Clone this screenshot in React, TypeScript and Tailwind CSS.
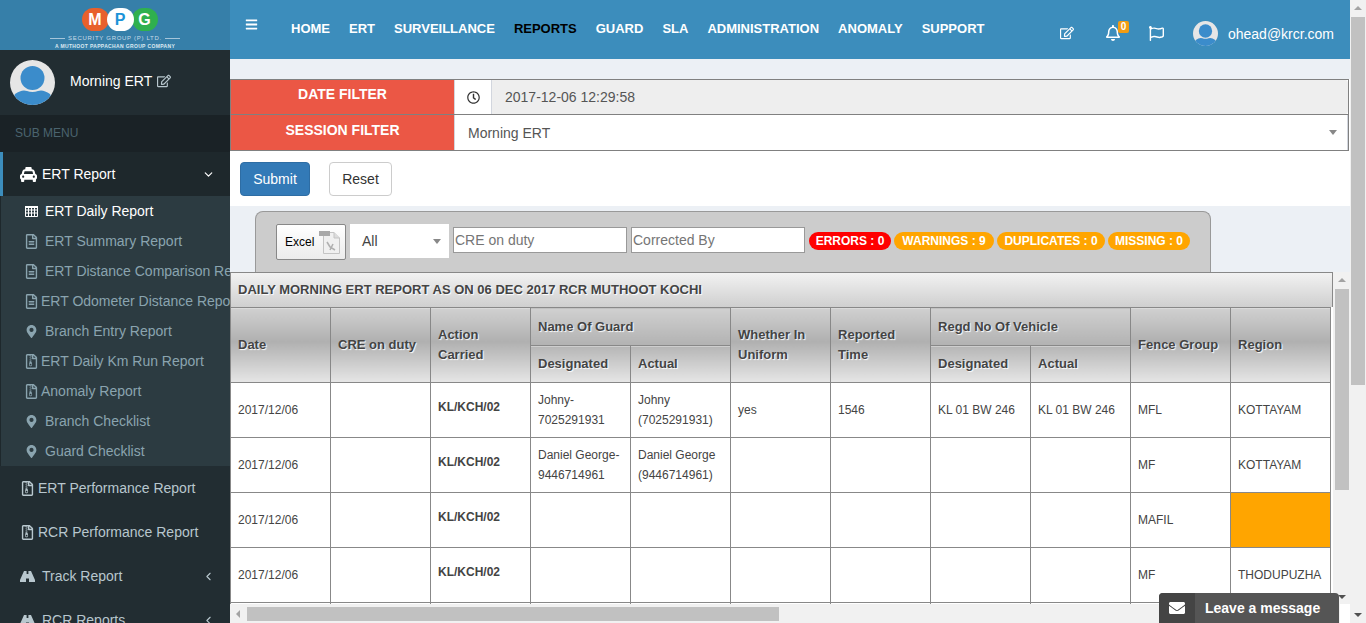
import type { ReactNode } from "react";
import { ChevronDown, ChevronLeft } from "lucide-react";
import {
  FaBars,
  FaEnvelope,
  FaMapMarkerAlt,
  FaRegBell,
  FaRegClock,
  FaRegEdit,
  FaRegFileAlt,
  FaRegFileArchive,
  FaRegFlag,
  FaTaxi,
} from "react-icons/fa";

const NAV = ["HOME", "ERT", "SURVEILLANCE", "REPORTS", "GUARD", "SLA", "ADMINISTRATION", "ANOMALY", "SUPPORT"];

const SUB_ITEMS = [
  { label: "ERT Daily Report", icon: "table", active: true },
  { label: "ERT Summary Report", icon: "file" },
  { label: "ERT Distance Comparison Report", icon: "file" },
  { label: "ERT Odometer Distance Report", icon: "file", tight: true },
  { label: "Branch Entry Report", icon: "pin" },
  { label: "ERT Daily Km Run Report", icon: "zip", tight: true },
  { label: "Anomaly Report", icon: "zip", tight: true },
  { label: "Branch Checklist", icon: "pin" },
  { label: "Guard Checklist", icon: "pin" },
];

const ROWS = [
  { fence: "MFL", region: "KOTTAYAM", cells: ["Johny-", "7025291931", "Johny", "(7025291931)"], uniform: "yes", time: "1546", regd: "KL 01 BW 246" },
  { fence: "MF", region: "KOTTAYAM", cells: ["Daniel George-", "9446714961", "Daniel George", "(9446714961)"] },
  { fence: "MAFIL", region: "", warn: true },
  { fence: "MF", region: "THODUPUZHA" },
];

export default function App() {
  return (
    <div className="flex h-[623px] w-[1366px] overflow-hidden bg-[#ecf0f5] font-['Liberation_Sans',Arial,sans-serif] text-sm text-[#333]">
      <Sidebar />
      <div className="flex min-w-0 flex-1 flex-col">
        <TopBar />
        <div className="h-5 shrink-0" />
        <FilterBox />
        <ReportToolbar />
        <ReportTable />
      </div>
      <PageScrollbar />
      <MessageWidget />
    </div>
  );
}

function Sidebar() {
  return (
    <aside className="flex h-full w-[230px] shrink-0 flex-col overflow-hidden bg-[#222d32]">
      <Logo />
      <div className="flex h-[65px] shrink-0 items-center pl-2.5">
        <Avatar className="h-[45px] w-[45px]" />
        <span className="ml-[15px] mb-[4px] text-sm text-white">Morning ERT</span>
        <FaRegEdit className="mb-[4px] ml-[5px] text-[14px] text-[#b8c7ce]" />
      </div>
      <div className="flex h-[37px] shrink-0 items-center bg-[#1a2226] pb-px pl-[15px] text-xs text-[#4b646f]">SUB MENU</div>
      <div className="flex h-11 shrink-0 items-center border-l-[3px] border-[#3c8dbc] bg-[#1e282c] pl-[17px] pr-[15px] text-white">
        <FaTaxi className="shrink-0 text-[17px]" />
        <span className="ml-[5px]">ERT Report</span>
        <ChevronDown className="ml-auto" size={13} strokeWidth={2.2} />
      </div>
      <div className="flex shrink-0 flex-col border-l border-[#1e282c] bg-[#2c3b41]">
        {SUB_ITEMS.map((item) => (
          <div
            className={`flex h-[30px] items-center overflow-hidden whitespace-nowrap pl-6 ${item.active ? "text-white" : "text-[#8aa4af]"}`}
            key={item.label}
          >
            <span className="flex w-3 shrink-0 justify-center">
              <SubIcon name={item.icon} />
            </span>
            <span className={item.tight ? "ml-[4px]" : "ml-2"}>{item.label}</span>
          </div>
        ))}
      </div>
      <MenuRow icon={<FaRegFileArchive className="shrink-0 text-[15px]" />} label="ERT Performance Report" />
      <MenuRow icon={<FaRegFileArchive className="shrink-0 text-[15px]" />} label="RCR Performance Report" />
      <MenuRow chevron icon={<BinocularsIcon />} label="Track Report" wide />
      <MenuRow chevron icon={<BinocularsIcon />} label="RCR Reports" wide />
    </aside>
  );
}

function MenuRow({ chevron, icon, label, wide }: { chevron?: boolean; icon: ReactNode; label: string; wide?: boolean }) {
  return (
    <div className="flex h-11 shrink-0 items-center pl-[20px] pr-[15px] text-[#b8c7ce]">
      {icon}
      <span className={wide ? "ml-[7px]" : "ml-[3px]"}>{label}</span>
      {chevron && <ChevronLeft className="ml-auto" size={13} strokeWidth={2} />}
    </div>
  );
}

function SubIcon({ name }: { name: string }) {
  if (name === "table") return <TableIcon />;
  if (name === "pin") return <FaMapMarkerAlt className="shrink-0 text-[13px]" />;
  if (name === "zip") return <FaRegFileArchive className="shrink-0 text-[15px]" />;
  return <FaRegFileAlt className="shrink-0 text-[15px]" />;
}

function TableIcon() {
  return (
    <svg aria-hidden="true" className="h-[11px] w-[13px] shrink-0" fill="none" stroke="currentColor" viewBox="0 0 13 11">
      <path d="M.5.5h12v10H.5zM.5 4h12M.5 7h12M3.5 1v9M6.5 1v9M9.5 1v9" />
      <path d="M0 0h13v2H0z" fill="currentColor" stroke="none" />
    </svg>
  );
}

function BinocularsIcon() {
  return (
    <svg aria-hidden="true" className="h-[11px] w-[15px] shrink-0" fill="currentColor" viewBox="0 0 15 11">
      <path d="M4 0h2.6v3h1.8V0H11l4 9v2H9V7.5H6V11H0V9z" />
    </svg>
  );
}

function Logo() {
  return (
    <div className="flex h-[50px] shrink-0 flex-col items-center bg-[#367fa9] pl-[9px] pt-2">
      <div className="flex h-[23px] items-center text-[16px] font-bold leading-none">
        <span className="flex h-[23px] w-[27px] items-center justify-center rounded-full bg-[#e8602c] text-white">M</span>
        <span className="z-10 -mx-[2px] flex h-[23px] w-[27px] items-center justify-center rounded-full bg-white text-[#1b93d8]">P</span>
        <span className="flex h-[23px] w-[26px] items-center justify-center rounded-full bg-[#2fb04e] text-white">G</span>
      </div>
      <div className="-ml-[9px] mt-[3px] flex items-center gap-[3px] text-[6px] leading-[8px] tracking-[0.7px] text-[#c7dbe8]">
        <span className="h-px w-[15px] bg-[#a5c5da]" />
        SECURITY GROUP (P) LTD.
        <span className="h-px w-[15px] bg-[#a5c5da]" />
      </div>
      <div className="-ml-[9px] mt-px text-[5px] font-bold leading-[7px] tracking-[0.35px] text-[#dce9f1]">A MUTHOOT PAPPACHAN GROUP COMPANY</div>
    </div>
  );
}

function Avatar({ className }: { className: string }) {
  return (
    <svg aria-hidden="true" className={`${className} shrink-0`} viewBox="0 0 45 45">
      <defs>
        <clipPath id="avatar-clip">
          <circle cx="22.5" cy="22.5" r="22.5" />
        </clipPath>
      </defs>
      <g clipPath="url(#avatar-clip)">
        <rect fill="#e6e6e6" height="45" width="45" />
        <circle cx="22.5" cy="18" fill="#3b8ccb" r="12" />
        <path d="M0 45 L5 34 Q12 29 17 31 Q22.5 33 28 31 Q33 29 40 34 L45 45 Z" fill="#3b8ccb" />
      </g>
    </svg>
  );
}

function TopBar() {
  return (
    <header className="flex h-[59px] shrink-0 items-start bg-[#3c8dbc] text-white">
      <FaBars className="ml-[15px] mt-[18px] text-[13px]" />
      <nav className="ml-[33px] mt-[20px] flex gap-[19px] text-[13px] font-bold leading-[18px]">
        {NAV.map((item) => (
          <span className={item === "REPORTS" ? "text-black" : "text-white"} key={item}>
            {item}
          </span>
        ))}
      </nav>
      <div className="ml-auto mt-[22px] flex items-start pr-[16px]">
        <FaRegEdit className="mt-[4px] text-[14px]" />
        <span className="relative ml-[31px] mt-[3px]">
          <FaRegBell className="text-[16px]" />
          <span className="absolute -right-[8px] -top-[4px] flex h-[12px] w-[11px] items-center justify-center rounded-[2px] bg-[#f39c12] text-[10px] font-bold leading-none text-white">
            0
          </span>
        </span>
        <FaRegFlag className="ml-[28px] mt-[4px] text-[15px]" />
        <Avatar className="ml-[29px] -mt-[1px] h-[25px] w-[25px]" />
        <span className="ml-[10px] leading-[24px]">ohead@krcr.com</span>
      </div>
    </header>
  );
}

function FilterBox() {
  return (
    <section className="flex h-[127px] shrink-0 flex-col bg-white">
      <div className="mr-px flex h-[36px] border border-[#808080]">
        <div className="w-[223px] shrink-0 bg-[#eb5745] pt-[6px] text-center text-sm font-bold leading-4 text-white">DATE FILTER</div>
        <div className="flex w-[38px] shrink-0 items-center justify-center border-x border-[#d2d6de] bg-white">
          <FaRegClock className="text-[13px] text-[#333]" />
        </div>
        <div className="flex flex-1 items-center rounded-r-[3px] bg-[#eee] pl-[13px] text-sm text-[#555]">2017-12-06 12:29:58</div>
      </div>
      <div className="mr-px flex h-[36px] border border-t-0 border-[#808080]">
        <div className="w-[223px] shrink-0 bg-[#eb5745] pt-[7px] text-center text-sm font-bold leading-4 text-white">SESSION FILTER</div>
        <div className="flex flex-1 items-center border-x border-[#d2d6de] bg-white pl-[13px] text-sm text-[#555]">
          Morning ERT
          <span className="ml-auto mr-[10px] h-0 w-0 border-x-[4px] border-t-[5px] border-x-transparent border-t-[#888]" />
        </div>
      </div>
      <div className="flex gap-[19px] pl-[10px] pt-[11px]">
        <button className="h-[34px] w-[70px] rounded border border-[#2e6da4] bg-[#337ab7] text-sm text-white" type="button">
          Submit
        </button>
        <button className="h-[34px] w-[63px] rounded border border-[#ccc] bg-white text-sm text-[#333]" type="button">
          Reset
        </button>
      </div>
    </section>
  );
}

function ReportToolbar() {
  return (
    <div className="mt-[5px] ml-[25px] flex h-[61px] w-[956px] shrink-0 items-start self-start rounded-t-lg border border-b-0 border-[#999] bg-[#ccc] pl-[20px] pt-[12px]">
      <button className="flex h-9 w-[70px] items-center rounded-[2px] border border-[#888] bg-[linear-gradient(#fff,#ececec)] pl-[8px] text-xs text-black" type="button">
        Excel
        <ExcelIcon />
      </button>
      <div className="ml-[4px] flex h-[34px] w-[99px] items-center bg-white pl-[12px] text-sm text-[#444]">
        All
        <span className="ml-auto mr-[8px] h-0 w-0 border-x-[4px] border-t-[5px] border-x-transparent border-t-[#888]" />
      </div>
      <Field placeholder="CRE on duty" />
      <Field placeholder="Corrected By" />
      <div className="ml-[4px] mt-[8px] flex gap-[3px] text-xs font-bold leading-[18px] text-white">
        <Badge className="w-[82px] bg-[#f00]">ERRORS : 0</Badge>
        <Badge className="w-[100px] bg-[#ffa500]">WARNINGS : 9</Badge>
        <Badge className="w-[108px] bg-[#ffa500]">DUPLICATES : 0</Badge>
        <Badge className="w-[82px] bg-[#ffa500]">MISSING : 0</Badge>
      </div>
    </div>
  );
}

function Field({ placeholder }: { placeholder: string }) {
  return (
    <div className="ml-[4px] mt-[3px] flex h-[26px] w-[174px] items-center border border-[#999] bg-white pl-px text-sm text-[#757575]">
      {placeholder}
    </div>
  );
}

function Badge({ children, className }: { children: ReactNode; className: string }) {
  return <span className={`h-[18px] rounded-[9px] text-center ${className}`}>{children}</span>;
}

function ExcelIcon() {
  return (
    <svg aria-hidden="true" className="ml-[5px] h-[24px] w-[21px] shrink-0" viewBox="0 0 21 24">
      <path d="M4.5 2.5 H15 L20.5 8 V23.5 H4.5 Z" fill="#f0f0f0" stroke="#c4c4c4" />
      <path d="M15 2.5 V8 H20.5" fill="#dcdcdc" stroke="#c4c4c4" />
      <rect fill="#a9a9a9" height="5" width="11" x="0" y="1" />
      <path d="M8 12 L11 17 L16 20 M11 20 L14 14" fill="none" stroke="#b0b0b0" strokeWidth="1.6" />
    </svg>
  );
}

const cellBase = "border border-[#888] px-[7px] text-left align-middle text-[13px] font-bold leading-5 text-[#444] [text-shadow:1px_1px_1px_#fff]";
const headFull = `${cellBase} bg-[linear-gradient(#d0d0d0,#b0b0b0_45%,#e6e6e6)]`;
const headTop = `${cellBase} bg-[linear-gradient(#d0d0d0,#b2b2b2)]`;
const headBottom = `${cellBase} bg-[linear-gradient(#b6b6b6,#e6e6e6)]`;
const bodyCell = "border border-[#888] px-[7px] align-middle text-xs leading-5 text-[#444]";

function ReportTable() {
  return (
    <div className="flex min-h-0 flex-1 flex-col bg-white">
      <div className="flex min-h-0 flex-1">
        <div className="min-w-0 flex-1 overflow-hidden">
          <div className="h-[35px] whitespace-nowrap border border-b-0 border-[#888] bg-[linear-gradient(#f2f2f2,#cfcfcf)] px-[7px] text-[13px] font-bold leading-[33px] text-[#444] [text-shadow:1px_1px_1px_#fff]">
            DAILY MORNING ERT REPORT AS ON 06 DEC 2017 RCR MUTHOOT KOCHI
          </div>
          <table className="w-[1101px] table-fixed border-collapse">
            <colgroup>
              {Array.from({ length: 11 }, (_, i) => (
                <col className="w-[100px]" key={i} />
              ))}
            </colgroup>
            <thead>
              <tr className="h-[38px]">
                <th className={headFull} rowSpan={2}>Date</th>
                <th className={headFull} rowSpan={2}>CRE on duty</th>
                <th className={headFull} rowSpan={2}>Action Carried</th>
                <th className={headTop} colSpan={2}>Name Of Guard</th>
                <th className={headFull} rowSpan={2}>Whether In Uniform</th>
                <th className={headFull} rowSpan={2}>Reported Time</th>
                <th className={headTop} colSpan={2}>Regd No Of Vehicle</th>
                <th className={headFull} rowSpan={2}>Fence Group</th>
                <th className={headFull} rowSpan={2}>Region</th>
              </tr>
              <tr className="h-[37px]">
                <th className={headBottom}>Designated</th>
                <th className={headBottom}>Actual</th>
                <th className={headBottom}>Designated</th>
                <th className={headBottom}>Actual</th>
              </tr>
            </thead>
            <tbody>
              {ROWS.map((row, i) => (
                <tr className="h-[55px]" key={i}>
                  <td className={bodyCell}>2017/12/06</td>
                  <td className={bodyCell} />
                  <td className={bodyCell}>
                    <span className="relative -top-[3px] font-bold">KL/KCH/02</span>
                  </td>
                  <td className={bodyCell}>
                    {row.cells && (
                      <>
                        {row.cells[0]}
                        <br />
                        {row.cells[1]}
                      </>
                    )}
                  </td>
                  <td className={bodyCell}>
                    {row.cells && (
                      <>
                        {row.cells[2]}
                        <br />
                        {row.cells[3]}
                      </>
                    )}
                  </td>
                  <td className={bodyCell}>{row.uniform}</td>
                  <td className={bodyCell}>{row.time}</td>
                  <td className={`${bodyCell} whitespace-nowrap`}>{row.regd}</td>
                  <td className={`${bodyCell} whitespace-nowrap`}>{row.regd}</td>
                  <td className={bodyCell}>{row.fence}</td>
                  <td className={row.warn ? `${bodyCell} bg-[#ffa500]` : bodyCell}>{row.region}</td>
                </tr>
              ))}
              <tr className="h-[55px]">
                {Array.from({ length: 11 }, (_, i) => (
                  <td className={bodyCell} key={i} />
                ))}
              </tr>
            </tbody>
          </table>
        </div>
        <div className="flex w-[17px] shrink-0 flex-col items-center bg-[#f1f1f1]">
          <span className="mt-[6px] h-0 w-0 border-x-[4px] border-b-[4px] border-x-transparent border-b-[#a3a3a3]" />
          <span className="mt-[7px] h-[201px] w-[14px] bg-[#c1c1c1]" />
          <span className="mt-auto mb-[5px] h-0 w-0 border-x-[4px] border-t-[4px] border-x-transparent border-t-[#505050]" />
        </div>
      </div>
      <div className="flex h-[19px] shrink-0 items-center bg-[#f1f1f1]">
        <span className="ml-[6px] h-0 w-0 border-y-[4px] border-r-[4px] border-y-transparent border-r-[#a3a3a3]" />
        <span className="ml-[7px] h-[14px] w-[532px] bg-[#c1c1c1]" />
        <span className="ml-auto h-full w-[10px] bg-white" />
      </div>
    </div>
  );
}

function PageScrollbar() {
  return (
    <div className="flex h-full w-4 shrink-0 flex-col items-center bg-[#f1f1f1]">
      <span className="mt-[6px] h-0 w-0 border-x-[4px] border-b-[4px] border-x-transparent border-b-[#a3a3a3]" />
      <span className="mt-[7px] h-[368px] w-[14px] bg-[#c1c1c1]" />
      <span className="mb-[6px] mt-auto h-0 w-0 border-x-[4px] border-t-[4px] border-x-transparent border-t-[#505050]" />
    </div>
  );
}

function MessageWidget() {
  return (
    <div className="absolute left-[1159px] top-[593px] flex h-[30px] w-[180px] overflow-hidden rounded-t-[4px] bg-[#555] text-white">
      <span className="flex w-9 items-center justify-center bg-[#444]">
        <FaEnvelope className="text-[16px]" />
      </span>
      <span className="ml-2.5 text-sm font-bold leading-[30px]">Leave a message</span>
    </div>
  );
}
